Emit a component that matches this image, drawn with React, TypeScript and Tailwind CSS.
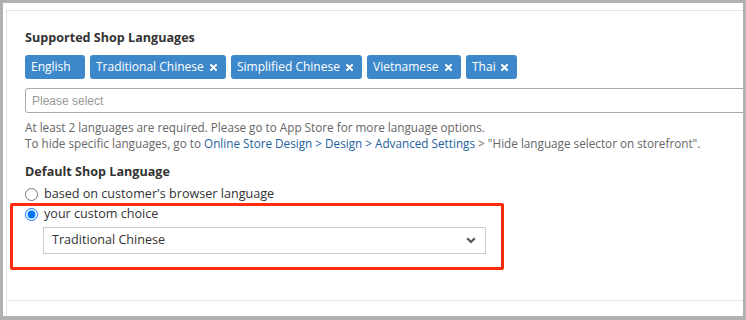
import React from "react";

const Tag = ({ label, removable = true, w }: { label: string; removable?: boolean; w: string }) => (
  <div className={`flex h-[24px] shrink-0 items-center whitespace-nowrap rounded-[3px] bg-[#3d88ca] pl-[6px] text-[12px] text-white ${w}`}>
    <span className="leading-none">{label}</span>
    {removable && (
      <svg className="ml-auto mr-[9px] shrink-0" width="7" height="7" viewBox="0 0 7 7">
        <path d="M1 1L6 6M6 1L1 6" stroke="white" strokeWidth="2" strokeLinecap="round" />
      </svg>
    )}
  </div>
);

export default function App() {
  return (
    <div
      className="box-border h-[320px] w-[746px] overflow-hidden border-b-[4px] border-l-[3px] border-r-[3px] border-t-[3px] border-[#b1b1b1] bg-white text-[#333]"
      style={{ fontFamily: '"Open Sans", "Noto Sans", sans-serif' }}
    >
      <div className="relative ml-[3px] mt-[7px] flex h-[320px] flex-col border-l border-t border-[#e4e4e4]">
        <div className="h-[289px] pl-[18px] pt-[18px]">
          <div className="text-[12.6px] font-bold leading-[18px]">Supported Shop Languages</div>
          <div className="mt-[8px] flex gap-[5px]">
            <Tag label="English" removable={false} w="w-[60px]" />
            <Tag label="Traditional Chinese" w="w-[136px]" />
            <Tag label="Simplified Chinese" w="w-[131px]" />
            <Tag label="Vietnamese" w="w-[94px]" />
            <Tag label="Thai" w="w-[51px]" />
          </div>
          <div
            className="mt-[9px] flex h-[25px] w-[760px] items-center rounded-[3px] border border-[#a9a9a9] pl-[6px] text-[12px] text-[#9a9a9a]"
            style={{ fontFamily: '"Liberation Sans", Arial, sans-serif' }}
          >
            Please select
          </div>
          <div className="mt-[6px] whitespace-nowrap text-[11.72px] leading-[16px] text-[#666]">
            <div>At least 2 languages are required. Please go to App Store for more language options.</div>
            <div>
              To hide specific languages, go to{" "}
              <span className="text-[#245f9e]">Online Store Design &gt; Design &gt; Advanced Settings</span> &gt; "Hide
              language selector on storefront".
            </div>
          </div>
          <div className="mt-[12px] text-[12.6px] font-bold leading-[18px]">Default Shop Language</div>
          <label className="mt-[3px] flex h-[20px] items-center text-[12.6px]">
            <input type="radio" name="lang" className="m-0 h-[13px] w-[13px]" />
            <span className="ml-[6px]">based on customer's browser language</span>
          </label>
          <label className="flex h-[20px] items-center text-[12.6px]">
            <input type="radio" name="lang" defaultChecked className="m-0 h-[13px] w-[13px]" />
            <span className="ml-[6px]">your custom choice</span>
          </label>
          <div className="ml-[18px] mt-[3px] flex h-[27px] w-[443px] items-center border border-[#cccccc] pl-[8px] pr-[9px] text-[12.6px]">
            <span>Traditional Chinese</span>
            <svg className="ml-auto" width="10" height="7" viewBox="0 0 10 7">
              <path d="M1.2 1.2L5 5L8.8 1.2" stroke="#555" strokeWidth="2.2" fill="none" />
            </svg>
          </div>
        </div>
        <div className="border-t border-[#e4e4e4]" />
        <div className="pointer-events-none absolute left-[3px] top-[192px] h-[67px] w-[494px] rounded-[2px] border-[3px] border-[#ff2a0a]" />
      </div>
    </div>
  );
}
